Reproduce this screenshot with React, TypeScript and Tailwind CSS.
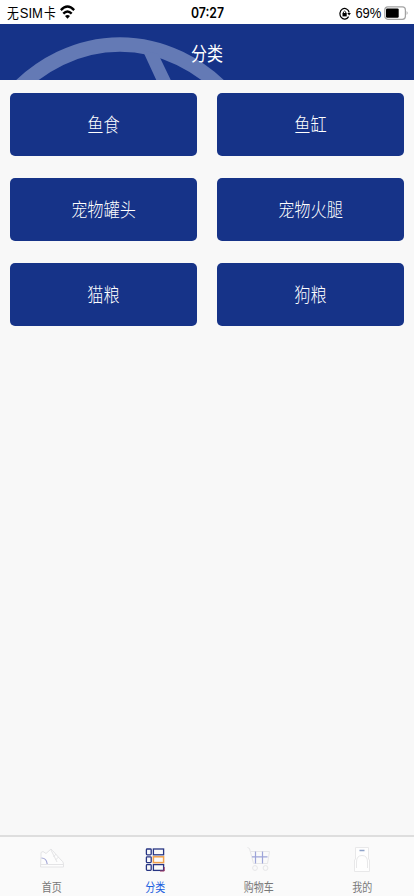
import React from 'react';

interface TabItem {
  label: string;
  icon: React.ReactNode;
  active?: boolean;
}

const categories = ['鱼食', '鱼缸', '宠物罐头', '宠物火腿', '猫粮', '狗粮'];

const ShoeIcon = () => (
  <svg width="26" height="26" viewBox="0 0 26 26" fill="none" stroke="#e4e4e6" strokeWidth="1">
    <path d="M2 9.5V5.5L4 4.5 7 6.5 12 2 13.5 3.5 22 13Q24.5 14.5 24.5 17V20H1.5Z" fill="#fdfdfd" />
    <path d="M1.5 17.5H24.5M12 3 18 15M14.5 10 17 7M16.5 13 19.5 10" />
    <path d="M2.5 11Q7.5 11 8.2 17" stroke="#a3a6d6" strokeWidth="1.2" />
  </svg>
);

const CategoryIcon = () => (
  <svg width="20" height="24" viewBox="0 0 20 24" fill="none" stroke="#273583" strokeWidth="1.3">
    <rect x="1.4" y="1" width="4.8" height="5.8" rx="0.8" />
    <rect x="8.4" y="1" width="10.2" height="5.8" />
    <rect x="1.4" y="8.8" width="4.8" height="5.8" rx="0.8" />
    <rect x="8.4" y="8.8" width="10.2" height="5.8" stroke="#f0a04b" strokeWidth="1.5" />
    <rect x="1.4" y="16.6" width="4.8" height="5.8" rx="0.8" />
    <rect x="8.4" y="16.6" width="10.2" height="5.8" />
    <path d="M15 23H19.2V19" stroke="#a3375f" strokeWidth="1" />
  </svg>
);

const CartIcon = () => (
  <svg width="24" height="26" viewBox="0 0 24 26" fill="none" stroke="#e6e6e8" strokeWidth="1">
    <path d="M0.5 0.5 2.5 1.5 6.5 16.5H20.5L22.5 4.5H3.5" />
    <circle cx="8" cy="21" r="2.4" />
    <circle cx="18.5" cy="21" r="2.4" />
    <path d="M8.5 4.5V16.5M15.5 4.5V16.5M5 9.8H20.5" stroke="#9da4d8" strokeWidth="1.2" />
  </svg>
);

const ProfileIcon = () => (
  <svg width="18" height="26" viewBox="0 0 18 26" fill="#fefefe" stroke="#e8e8e9" strokeWidth="1">
    <path d="M2.5 0.5H15.5V12L16.5 13V24.5H1.5V13L2.5 12Z" />
    <path d="M3.5 21V15Q3.5 8.5 9 8.5T14.5 15V21" />
    <path d="M6.5 3.5H11.5" stroke="#8fa3c9" strokeWidth="1.5" />
  </svg>
);

const tabs: TabItem[] = [
  { label: '首页', icon: <ShoeIcon /> },
  { label: '分类', icon: <CategoryIcon />, active: true },
  { label: '购物车', icon: <CartIcon /> },
  { label: '我的', icon: <ProfileIcon /> },
];

const StatusBar = () => (
  <div className="grid h-6 grid-cols-3 items-center bg-white pl-[7px] pr-[6px] leading-6 text-black">
    <div className="flex items-center">
      <span className="mt-px inline-block w-12 scale-y-[1.15] whitespace-nowrap font-['Liberation_Sans','Noto_Sans_CJK_SC'] text-[11.8px]">
        无<span className="mx-px text-[13px]">SIM</span>卡
      </span>
      <svg className="ml-[5px] -mt-px shrink-0" width="15" height="14" viewBox="0 0 15 14" fill="none" stroke="#000" strokeWidth="2.4">
        <path d="M0.8 5.1Q7.5 -2 14.2 5.1" />
        <path d="M3.3 8.7Q7.5 4.4 11.7 8.7" />
        <path d="M7.5 13.8 5 11Q7.5 8.8 10 11Z" fill="#000" stroke="none" />
      </svg>
    </div>
    <span className="scale-y-[1.2] text-center text-[12.2px] font-semibold leading-6">07:27</span>
    <div className="flex items-center justify-end">
      <svg className="mr-[5px] mt-[2px]" width="12" height="13" viewBox="0 0 12 13" fill="none" stroke="#000">
        <path d="M9.6 9.6A4.7 5.3 0 1 1 10.2 5.5" strokeWidth="1.2" />
        <path d="M8.3 6H11.9L10.1 8.6Z" fill="#000" stroke="none" />
        <path d="M3.5 6H7.7V9.4H3.5Z" fill="#000" stroke="none" />
        <path d="M4.4 6.2V5Q5.6 3.2 6.8 5V6.2" strokeWidth="0.9" />
      </svg>
      <span className="scale-y-[1.15] font-['Liberation_Sans'] text-[13px] leading-6 tracking-[-0.2px]">69%</span>
      <svg className="ml-[3px] shrink-0" width="24" height="14" viewBox="0 0 24 14" fill="none">
        <rect x="0.8" y="0.9" width="20.6" height="12.4" rx="3" stroke="#a3a3a3" strokeWidth="1.2" />
        <rect x="2" y="2.4" width="12.7" height="9.4" rx="1.2" fill="#000" />
        <path d="M22.6 5Q24.6 7 22.6 9Z" fill="#a3a3a3" />
      </svg>
    </div>
  </div>
);

const Header = () => (
  <header className="relative flex h-14 items-center justify-center overflow-hidden bg-[#163388]">
    {/* Lenkrad im Hintergrund */}
    <svg className="absolute inset-0" width="414" height="56" viewBox="0 24 414 56">
      <ellipse cx="120" cy="242.5" rx="162.5" ry="198" fill="none" stroke="#647ab5" strokeWidth="14.5" />
      <path d="M142 50 144.5 54.5 156.5 80.5H171L160.5 58.8 158 54Z" fill="#647ab5" />
    </svg>
    <h1 className="relative mt-[3px] scale-y-[1.2] text-[16px] leading-6 text-white">分类</h1>
  </header>
);

const App: React.FC = () => {
  return (
    <div className="flex h-screen w-full flex-col bg-[#f8f8f8] font-[Inter,'Noto_Sans_CJK_SC',sans-serif]">
      <StatusBar />
      <Header />

      <main className="grid flex-1 auto-rows-[63px] grid-cols-2 content-start gap-x-5 gap-y-[22px] px-[10px] pt-[13px]">
        {categories.map((name) => (
          <button
            key={name}
            type="button"
            className="flex items-center justify-center rounded-[5px] bg-[#163388] text-[16.2px] text-white"
          >
            <span className="mt-px scale-y-[1.2] font-light leading-6">{name}</span>
          </button>
        ))}
      </main>

      <nav className="grid h-[61px] grid-cols-4 border-t-2 border-[#dedede] bg-[#fafafa]">
        {tabs.map((tab) => (
          <div key={tab.label} className="flex flex-col items-center">
            <div className="mt-[9px] flex h-[27px] items-center justify-center">{tab.icon}</div>
            <span
              className={`mt-[6px] scale-y-[1.2] text-[10px] leading-4 ${tab.active ? 'text-[#1b5fe0]' : 'text-[#777777]'}`}
            >
              {tab.label}
            </span>
          </div>
        ))}
      </nav>
    </div>
  );
};

export default App;
